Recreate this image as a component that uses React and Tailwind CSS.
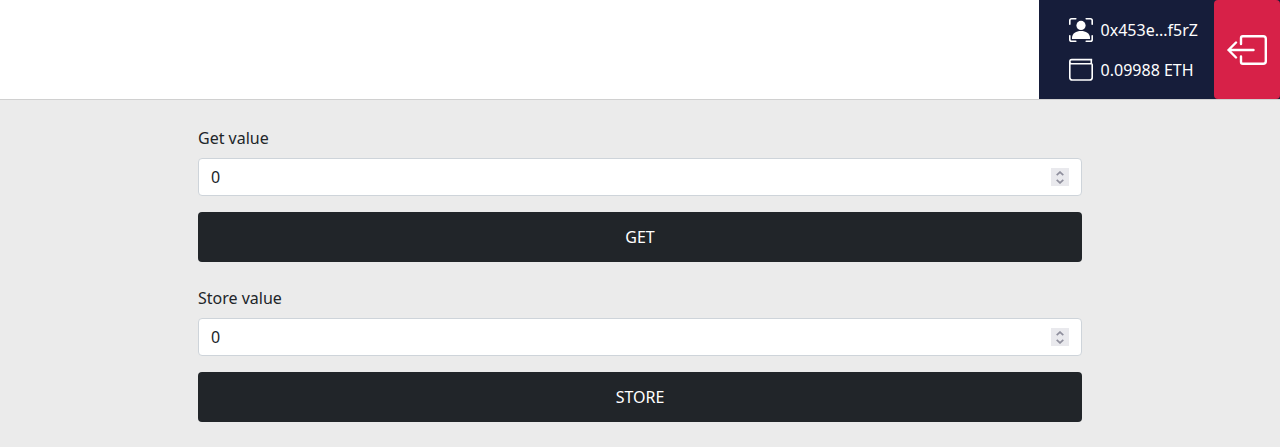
import { useState } from "react";

function PersonIcon() {
  return (
    <svg className="size-6" viewBox="0 0 24 24" fill="none" stroke="currentColor" strokeWidth="1.6" strokeLinecap="round">
      <path d="M.8 6.3V2.6Q.8.8 2.6.8H6.8M17.2.8H21.4Q23.2.8 23.2 2.6V6.3M23.2 17.7V21.4Q23.2 23.2 21.4 23.2H17.2M6.8 23.2H2.6Q.8 23.2.8 21.4V17.7" />
      <circle cx="12" cy="7.4" r="4.6" fill="currentColor" stroke="none" />
      <path d="M3 21V19.2C3.4 15.2 7 12.9 12 12.9S20.6 15.2 21 19.2V21Z" fill="currentColor" stroke="none" />
    </svg>
  );
}

function WalletIcon() {
  return (
    <svg className="size-6" viewBox="0 0 24 24" fill="none" stroke="currentColor" strokeWidth="1.6">
      <path d="M22.3 5.8H2.8C1.5 5.8.8 5 .8 3.7S1.5 1.6 2.8 1.6H23.2M22.3 1.6V5.8Q23.2 5.8 23.2 6.8V19.4Q23.2 22 20.6 22H3.4Q.8 22 .8 19.4V3.7" />
    </svg>
  );
}

function LogoutIcon() {
  return (
    <svg className="h-8 w-10" viewBox="0 0 40 32" fill="none" stroke="currentColor" strokeWidth="2.4" strokeLinecap="round" strokeLinejoin="round">
      <path d="M14 10V4Q14 2.2 15.8 2.2H36.2Q38.8 2.2 38.8 4.8V27.2Q38.8 29.8 36.2 29.8H15.8Q14 29.8 14 28V22.5" />
      <path d="M26.5 16H1.5M9 8.5L1.5 16L9 23.5" />
    </svg>
  );
}

function NumberField({ label, action }) {
  const [value, setValue] = useState(0);
  return (
    <div className="flex flex-col">
      <label className="mb-2 leading-6">{label}</label>
      <div className="mb-4 flex h-[38px] items-center justify-between rounded border border-[#ced4da] bg-white px-3">
        <span>{value}</span>
        <span className="flex size-[18px] flex-col items-center justify-center bg-[#e9e9ed] text-[#8f8f9d]">
          <button type="button" aria-label="Increase" className="flex h-2 w-full items-center justify-center" onClick={() => setValue(value + 1)}>
            <svg className="h-[5px] w-2" viewBox="0 0 8 5" fill="none" stroke="currentColor" strokeWidth="1.7"><path d="M.7 4.2L4 1.1L7.3 4.2" /></svg>
          </button>
          <button type="button" aria-label="Decrease" className="flex h-2 w-full items-center justify-center" onClick={() => setValue(value - 1)}>
            <svg className="h-[5px] w-2" viewBox="0 0 8 5" fill="none" stroke="currentColor" strokeWidth="1.7"><path d="M.7.8L4 3.9L7.3.8" /></svg>
          </button>
        </span>
      </div>
      <button type="button" className="h-[50px] rounded bg-[#212529] text-white">{action}</button>
    </div>
  );
}

export default function App() {
  return (
    <div className="flex h-[447px] flex-col bg-[#ebebeb] font-['Noto_Sans',sans-serif] text-base text-[#212529]">
      <header className="flex h-[100px] justify-end border-b border-[#d0d0d0] bg-white">
        <div className="flex w-[241px] bg-[#161d3a] text-white">
          <div className="flex w-[175px] flex-col justify-center gap-4 pt-px pl-[30px]">
            <div className="flex h-6 items-center gap-[7.6px]">
              <PersonIcon />
              <span>0x453e...f5rZ</span>
            </div>
            <div className="flex h-6 items-center gap-[7.6px]">
              <WalletIcon />
              <span>0.09988 ETH</span>
            </div>
          </div>
          <button type="button" aria-label="Log out" className="flex w-[66px] items-center justify-center rounded bg-[#d72148] pt-px">
            <LogoutIcon />
          </button>
        </div>
      </header>
      <main className="mx-auto flex w-[884px] flex-col gap-6 pt-[26px]">
        <NumberField label="Get value" action="GET" />
        <NumberField label="Store value" action="STORE" />
      </main>
    </div>
  );
}
